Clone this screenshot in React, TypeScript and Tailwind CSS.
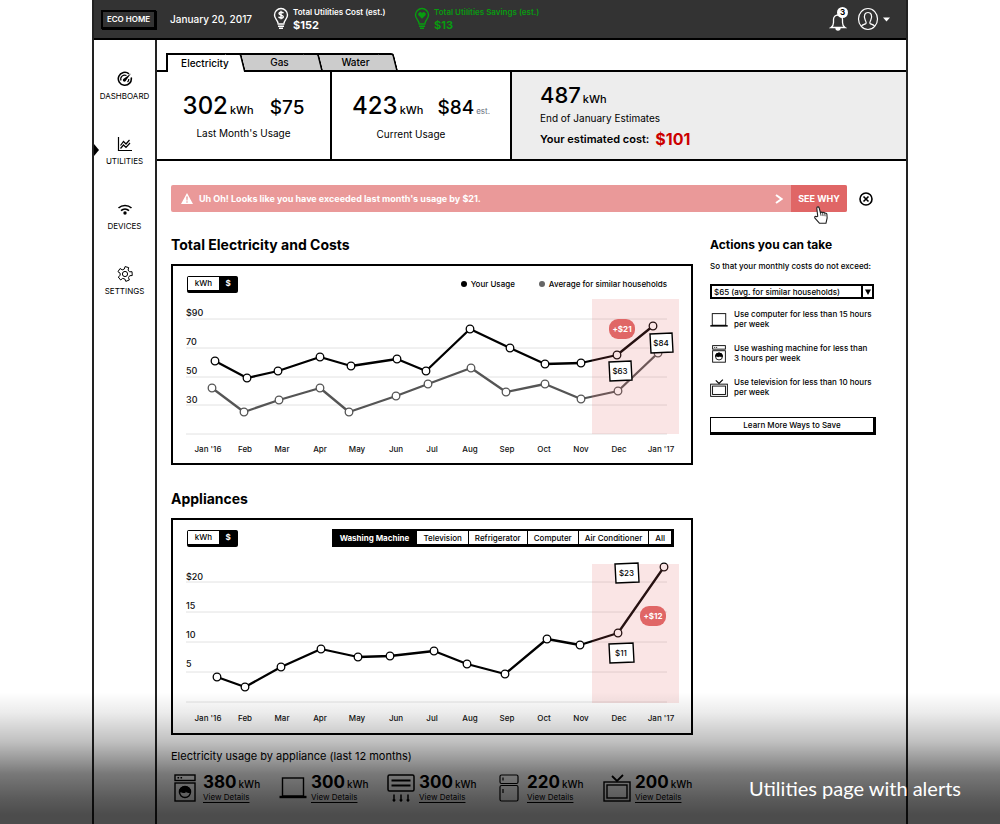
import React from "react";

type Point = [number, number];

const months = ["Jan '16", "Feb", "Mar", "Apr", "May", "Jun", "Jul", "Aug", "Sep", "Oct", "Nov", "Dec", "Jan '17"];
const monthX = [208, 245, 282, 320, 357, 396, 432, 470, 507, 544, 581, 619, 661];

const usage: Point[] = [[215, 361], [247, 378], [278, 371], [320, 357], [351, 366], [397, 359], [426, 371], [470, 329], [510, 348], [545, 364], [581, 363], [617, 355], [653, 326]];
const average: Point[] = [[212, 388], [244, 412], [279, 400], [320, 388], [349, 412], [396, 396], [428, 384], [471, 368], [506, 392], [545, 384], [581, 399], [618, 391], [658, 353]];
const washer: Point[] = [[217, 677], [245, 687], [281, 667], [321, 649], [358, 657], [390, 656], [434, 651], [467, 664], [505, 674], [547, 639], [580, 645], [618, 633], [664, 567]];

function Series({ points, color }: { points: Point[]; color: string }) {
  return (
    <g stroke={color}>
      <polyline points={points.map((p) => p.join(",")).join(" ")} fill="none" strokeWidth="2.3" strokeLinejoin="round" />
      {points.map(([x, y]) => (
        <circle key={x} cx={x} cy={y} r="3.8" fill="#fff" strokeWidth="1.3" />
      ))}
    </g>
  );
}

function Grid({ lines, labels, labelsY, monthsY }: { lines: number[]; labels: string[]; labelsY: number; monthsY: number }) {
  return (
    <g fontSize="9" fontWeight="500" fill="#111">
      {lines.map((y) => (
        <line key={y} x1="186" x2="667" y1={y} y2={y} stroke="#e2e2e2" />
      ))}
      {labels.map((label, i) => (
        <text key={label} x="186" y={labelsY + i * 29}>
          {label}
        </text>
      ))}
      {months.map((m, i) => (
        <text key={m} x={monthX[i]} y={monthsY} fontSize="8" textAnchor="middle">
          {m}
        </text>
      ))}
    </g>
  );
}

function Tag({ x, y, w, label }: { x: number; y: number; w: number; label: string }) {
  return (
    <g>
      <path d={`M${x} ${y + 1} L${x + w} ${y} L${x + w + 1} ${y + 19} L${x + 1} ${y + 20} Z`} fill="#fff" stroke="#000" strokeWidth="1.4" />
      <text x={x + w / 2} y={y + 13} fontSize="8" fontWeight="500" textAnchor="middle">
        {label}
      </text>
    </g>
  );
}

function Delta({ cx, cy, label }: { cx: number; cy: number; label: string }) {
  return (
    <g>
      <rect x={cx - 13} y={cy - 10} width="26" height="20" rx="9" fill="#e06666" />
      <text x={cx} y={cy + 3} fontSize="8" fontWeight="700" fill="#fff" textAnchor="middle">
        {label}
      </text>
    </g>
  );
}

function UnitToggle() {
  return (
    <div className="flex h-[17px] w-[51px] rounded-[2px] border border-b-[3px] border-black bg-black text-[8px] leading-[12px]">
      <button className="w-[31px] bg-white font-medium">kWh</button>
      <button className="flex-1 font-bold text-white">$</button>
    </div>
  );
}

function Washer({ className }: { className: string }) {
  return (
    <svg viewBox="0 0 22 28" className={className} fill="none" stroke="currentColor" strokeWidth="1.4">
      <rect x="1" y="1" width="20" height="5.5" />
      <path d="M3.5 3.8h1.6M6.5 3.8h1.6" />
      <rect x="1" y="9" width="20" height="18" />
      <circle cx="11" cy="18" r="5.5" />
      <path d="M5.6 18c1.8-1.4 3.6 1.4 5.4 0s3.6 1.4 5.4 0a5.4 5.4 0 0 0-10.8 0Z" fill="currentColor" />
    </svg>
  );
}

function Laptop({ className }: { className: string }) {
  return (
    <svg viewBox="0 0 28 22" className={className} fill="none" stroke="currentColor" strokeWidth="1.4">
      <rect x="3.5" y="1" width="21" height="18" />
      <path d="M0.5 20h27" strokeWidth="2.4" />
    </svg>
  );
}

function Television({ className }: { className: string }) {
  return (
    <svg viewBox="0 0 28 28" className={className} fill="none" stroke="currentColor" strokeWidth="1.4">
      <rect x="1" y="8" width="26" height="19" />
      <rect x="4" y="11" width="20" height="13" />
      <path d="M9 2l5 5 6-6" strokeWidth="1.8" />
    </svg>
  );
}

function AirConditioner({ className }: { className: string }) {
  return (
    <svg viewBox="0 0 28 28" className={className} fill="none" stroke="currentColor" strokeWidth="1.5">
      <rect x="1" y="1" width="26" height="16" rx="1.5" />
      <path d="M4.5 6.500h19M4.5 11.500h19" strokeWidth="1.8" />
      <path d="M7 20.5v6M14 20.5v6M21 20.5v6M5.800 25.500l1.200 1.500 1.200-1.500M12.800 25.500l1.200 1.500 1.200-1.500M19.800 25.500l1.200 1.500 1.200-1.500" />
    </svg>
  );
}

function Fridge({ className }: { className: string }) {
  return (
    <svg viewBox="0 0 20 28" className={className} fill="none" stroke="currentColor" strokeWidth="1.2">
      <rect x="1" y="1" width="18" height="8.5" rx="1.5" />
      <rect x="1" y="11.5" width="18" height="15.5" rx="1.5" />
      <path d="M4 3.5v3M4 15v4" />
    </svg>
  );
}

function Bulb({ heart }: { heart?: boolean }) {
  return (
    <svg viewBox="0 0 16 24" className="h-6 w-4" fill="none" stroke="currentColor" strokeWidth="1.4">
      <path d="M5 16.5C5 13 1.5 12 1.5 8a6.5 6.5 0 0 1 13 0c0 4-3.5 5-3.5 8.5" />
      <path d="M4.5 17h7M5 19.2h6M6 21.3h4" />
      {heart ? (
        <path d="M8 11.800 4.400 8.200a2 2 0 0 1 3.600-2 2 2 0 0 1 3.600 2Z" fill="currentColor" stroke="none" />
      ) : (
        <path d="M10.400 6.300C9.900 5 6 4.800 6 6.600S10.300 8 10.300 9.800 6.100 11.300 5.600 9.700M8 3.800v8.400" />
      )}
    </svg>
  );
}

const gear = Array.from({ length: 5 }, (_, i) => {
  const at = (deg: number, r: number) => {
    const a = ((deg + i * 72 - 75) * Math.PI) / 180;
    return `${(8 + r * Math.cos(a)).toFixed(2)} ${(8 + r * Math.sin(a)).toFixed(2)}`;
  };
  return `${i ? "L" : "M"}${at(-15, 7.4)}L${at(15, 7.4)}L${at(23, 5)}L${at(49, 5)}`;
}).join("") + "Z";

const nav = [
  {
    label: "DASHBOARD",
    icon: (
      <>
        <path d="M12 2.800A6.500 6.500 0 1 0 14.200 6.500" strokeWidth="1.6" />
        <path d="M4 9.500A4 4 0 0 1 9.500 4.500M11.800 8A4 4 0 0 1 10.500 11" />
        <path d="m14 2.500-7 5a1.600 1.600 0 1 0 2 2Z" fill="currentColor" stroke="none" />
      </>
    ),
  },
  {
    label: "UTILITIES",
    icon: <path d="M1.5 1v13.500H15M3.500 9.500l3-4 2.500 2.500 3.500-4M3.500 12.500l3-3.500 2.500 2.500 4-4.500" />,
  },
  {
    label: "DEVICES",
    icon: (
      <>
        <path d="M1.500 7a9.500 9.500 0 0 1 13 0M4 9.700a6 6 0 0 1 8 0" strokeWidth="1.6" />
        <circle cx="8" cy="12" r="1.7" fill="currentColor" stroke="none" />
      </>
    ),
  },
  {
    label: "SETTINGS",
    icon: (
      <>
        <path d={gear} strokeLinejoin="round" strokeWidth="1" />
        <circle cx="8" cy="8" r="2.6" strokeWidth="1" />
      </>
    ),
  },
];

const tips = [
  { icon: <Laptop className="w-[18px]" />, text: "Use computer for less than 15 hours per week" },
  { icon: <Washer className="w-[14px]" />, text: "Use washing machine for less than 3 hours per week" },
  { icon: <Television className="w-[18px]" />, text: "Use television for less than 10 hours per week" },
];

const totals = [
  { value: 380, icon: <Washer className="h-7" /> },
  { value: 300, icon: <Laptop className="w-7" /> },
  { value: 300, icon: <AirConditioner className="h-7" /> },
  { value: 220, icon: <Fridge className="h-7" /> },
  { value: 200, icon: <Television className="h-7" /> },
];

const tabShape =
  "relative h-[17px] border-l-2 border-t-2 border-black pl-1 text-[10px] font-medium before:absolute before:-top-0.5 before:-right-2 before:bottom-0 before:w-4 before:origin-bottom before:skew-x-[14deg] before:rounded-tr-[3px] before:border-t-2 before:border-r-2 before:border-black";

export default function App() {
  return (
    <div className="relative min-h-screen overflow-hidden bg-white font-[Inter,'Noto_Sans',sans-serif] text-black">
      <div className="mx-auto flex min-h-screen max-w-[816px] flex-col border-x-2 border-[#222]">
        <header className="flex h-10 shrink-0 items-center border-b-2 border-black bg-[#333] pl-[7px] text-white">
          <button className="mr-3.5 h-[19px] w-[55px] border-2 border-black text-[8px] leading-none font-semibold shadow-[1px_1px_0_#000]">ECO HOME</button>
          <time className="w-[103px] text-[10px] font-medium">January 20, 2017</time>
          <div className="flex w-[141px] items-center gap-1">
            <Bulb />
            <div className="text-[8px] leading-[13px] font-semibold">
              <p>Total Utilities Cost (est.)</p>
              <p className="text-[11px] font-bold">$152</p>
            </div>
          </div>
          <div className="flex items-center gap-1 text-[#089c10]">
            <Bulb heart />
            <div className="text-[8px] leading-[13px] font-semibold">
              <p>Total Utilities Savings (est.)</p>
              <p className="text-[11px] font-bold">$13</p>
            </div>
          </div>
          <div className="mr-4 ml-auto flex items-center gap-2.5">
            <button aria-label="Notifications" className="relative">
              <svg viewBox="0 0 18 24" className="h-6 w-[18px]" fill="none" stroke="currentColor" strokeWidth="1.3">
                <path d="M2 20.500h14c-1.500-1-2.500-2-2.500-5v-3a4.500 4.500 0 0 0-9 0v3c0 3-1 4-2.500 5Z" />
                <path d="M7 21a2 2 0 0 0 4 0Z" fill="currentColor" />
              </svg>
              <span className="absolute top-0 left-2 size-[11px] rounded-full bg-white text-[8px] leading-[11px] font-bold text-black">3</span>
            </button>
            <button aria-label="Account" className="flex items-center gap-1">
              <svg viewBox="0 0 22 24" className="h-6 w-[22px]" fill="none" stroke="currentColor" strokeWidth="1.2">
                <ellipse cx="11" cy="12" rx="9.5" ry="10.5" />
                <path d="M4.500 19c1-1.500 3.500-1.500 4.500-2.500.6-1-.2-2-.8-3.500-2-5 0-7.500 2.800-7.500s4.800 2.500 2.800 7.500c-.6 1.500-1.400 2.500-.8 3.500 1 1 3.500 1 4.500 2.500" />
              </svg>
              <svg viewBox="0 0 7 5" className="w-[7px]" fill="currentColor">
                <path d="M0 0.5h7L3.5 4.5Z" />
              </svg>
            </button>
          </div>
        </header>

        <div className="flex grow">
          <nav className="flex w-[63px] shrink-0 flex-col gap-[35px] border-r-2 border-[#222] pt-[31px]">
            {nav.map(({ label, icon }) => (
              <a key={label} href="#" className="relative flex flex-col items-center gap-1 text-[8px] leading-[10px]">
                {label === "UTILITIES" && (
                  <svg viewBox="0 0 5 12" className="absolute top-2 left-0 h-3">
                    <path d="M0 0l5 6-5 6Z" />
                  </svg>
                )}
                <svg viewBox="0 0 16 16" className="size-4" fill="none" stroke="currentColor" strokeWidth="1.2">
                  {icon}
                </svg>
                {label}
              </a>
            ))}
          </nav>

          <main className="min-w-0 grow pt-[13px]">
            <div role="tablist" className="flex items-end pl-[9px]">
              <button role="tab" aria-selected="true" className={tabShape + " z-20 -mb-0.5 h-[19px] w-[72px] bg-white before:bg-white"}>
                <span className="relative">Electricity</span>
              </button>
              <button role="tab" aria-selected="false" className={tabShape + " z-10 w-[77px] bg-[#ccc] before:bg-[#ccc]"}>
                <span className="relative">Gas</span>
              </button>
              <button role="tab" aria-selected="false" className={tabShape + " w-[75px] bg-[#ccc] before:bg-[#ccc]"}>
                <span className="relative">Water</span>
              </button>
            </div>

            <section className="flex h-[91px] border-y-2 border-black text-[10px] leading-[15px]">
              <div className="flex w-[173px] flex-col items-center justify-center gap-1 pt-1">
                <p className="flex items-baseline text-2xl leading-6 font-medium">
                  302<span className="mr-4 ml-0.5 text-[11px]">kWh</span>
                  <span className="text-[19px]">$75</span>
                </p>
                <p>Last Month's Usage</p>
              </div>
              <div className="flex w-[182px] flex-col items-center justify-center gap-1 border-x-2 border-black pt-1">
                <p className="flex items-baseline text-2xl leading-6 font-medium">
                  423<span className="mr-3.5 ml-0.5 text-[11px]">kWh</span>
                  <span className="text-[19px]">$84</span>
                  <span className="ml-0.5 text-[8px] font-normal text-gray-500">est.</span>
                </p>
                <p className="pr-5">Current Usage</p>
              </div>
              <div className="flex grow flex-col justify-center gap-[5px] bg-[#ededed] pl-7">
                <p className="flex items-baseline text-[22px] leading-[22px] font-medium">
                  487<span className="ml-0.5 text-[11px] leading-none">kWh</span>
                </p>
                <p>End of January Estimates</p>
                <p className="flex items-center gap-1.5 text-[11px] leading-4 font-semibold">
                  Your estimated cost: <strong className="text-[16px] font-bold text-[#cc0000]">$101</strong>
                </p>
              </div>
            </section>

            <div className="mt-6 ml-3.5 flex h-[27px] items-center">
              <div role="alert" className="flex h-full w-[676px] items-center overflow-hidden rounded-[2px] bg-[#ea9999] pl-2.5 text-[9px] font-bold text-white">
                <svg viewBox="0 0 12 11" className="mr-1.5 w-3" fill="currentColor">
                  <path fillRule="evenodd" d="M6 0 12 11H0ZM5.200 3.500l.3 4h1l.3-4ZM6 8.200a.8.8 0 1 0 0 1.600.8.8 0 0 0 0-1.600Z" />
                </svg>
                Uh Oh! Looks like you have exceeded last month's usage by $21.
                <svg viewBox="0 0 8 10" className="mr-2 ml-auto w-2" fill="none" stroke="currentColor" strokeWidth="2">
                  <path d="M1 1l5.500 4L1 9" />
                </svg>
                <button className="h-full w-14 bg-[#e06666] text-[9px]">SEE WHY</button>
              </div>
              <button aria-label="Dismiss alert" className="ml-3">
                <svg viewBox="0 0 14 14" className="size-3.5" fill="none" stroke="currentColor" strokeWidth="1.6">
                  <circle cx="7" cy="7" r="6" />
                  <path d="m4.500 4.500 5 5m0-5-5 5" />
                </svg>
              </button>
            </div>

            <div className="mt-6 ml-3.5 flex">
              <div className="w-[522px]">
                <h2 className="text-[14px] leading-[18px] font-bold">Total Electricity and Costs</h2>
                <section className="mt-2.5 border-2 border-black">
                  <div className="flex h-[30px] items-center justify-between pt-1.5 pr-6 pl-3.5">
                    <UnitToggle />
                    <div className="flex items-center text-[8px] font-medium">
                      <i className="mr-1 size-1.5 rounded-full bg-black" />
                      Your Usage
                      <i className="mr-1 ml-6 size-1.5 rounded-full bg-[#666]" />
                      Average for similar households
                    </div>
                  </div>
                  <svg viewBox="173 296 518 167" className="block w-full">
                    <Grid lines={[319, 348, 377, 405, 434]} labels={["$90", "70", "50", "30"]} labelsY={316} monthsY={452} />
                    <Series points={average} color="#555" />
                    <Series points={usage} color="#000" />
                    <rect x="592" y="299" width="87" height="135" fill="#e06666" fillOpacity="0.17" />
                    <Delta cx={622} cy={329} label="+$21" />
                    <Tag x={609} y={361} w={22} label="$63" />
                    <Tag x={650} y={333} w={22} label="$84" />
                  </svg>
                </section>

                <h2 className="mt-[25px] text-[14px] leading-[18px] font-bold">Appliances</h2>
                <section className="mt-2.5 border-2 border-black">
                  <div className="flex h-[30px] items-center justify-between pt-1.5 pr-[17px] pl-3.5">
                    <UnitToggle />
                    <div className="flex h-[18px] divide-x divide-black border border-t-2 border-r-[3px] border-b-[3px] border-black text-[8px] leading-none font-medium">
                      <button className="bg-black px-[7px] font-bold text-white">Washing Machine</button>
                      {["Television", "Refrigerator", "Computer", "Air Conditioner", "All"].map((name) => (
                        <button key={name} className="px-1.5">
                          {name}
                        </button>
                      ))}
                    </div>
                  </div>
                  <svg viewBox="173 550 518 183" className="block w-full">
                    <Grid lines={[582, 612, 642, 672, 702]} labels={["$20", "15", "10", "5"]} labelsY={580} monthsY={721} />
                    <Series points={washer} color="#000" />
                    <rect x="592" y="564" width="87" height="139" fill="#e06666" fillOpacity="0.17" />
                    <Tag x={615} y={563} w={23} label="$23" />
                    <Tag x={609} y={643} w={24} label="$11" />
                    <Delta cx={653} cy={616} label="+$12" />
                  </svg>
                </section>

                <h3 className="mt-[13px] text-[11px] leading-4">Electricity usage by appliance (last 12 months)</h3>
                <ul className="mt-2.5 mb-3 flex gap-1">
                  {totals.map(({ value, icon }, i) => (
                    <li key={i} className="flex w-[104px] shrink-0 items-center gap-1">
                      <span className="flex w-7 justify-center">{icon}</span>
                      <div>
                        <p className="flex items-baseline gap-0.5 text-[17px] leading-4 font-bold">
                          {value}
                          <span className="text-[10px] font-medium">kWh</span>
                        </p>
                        <a href="#" className="block text-[8px] leading-[10px] underline underline-offset-2">
                          View Details
                        </a>
                      </div>
                    </li>
                  ))}
                </ul>
              </div>

              <aside className="ml-[17px] w-[166px] text-[8px] leading-[10px] font-medium">
                <h2 className="text-[12px] leading-[18px] font-bold">Actions you can take</h2>
                <label htmlFor="budget" className="mt-[7px] block whitespace-nowrap">
                  So that your monthly costs do not exceed:
                </label>
                <div className="relative mt-[13px] h-[15px] w-[164px] border-2 border-black">
                  <select id="budget" className="block h-full w-full appearance-none bg-white pl-0.5 leading-[10px]">
                    <option>$65 (avg. for similar households)</option>
                  </select>
                  <span className="pointer-events-none absolute inset-y-0 right-0 flex w-[11px] items-center justify-center border-l-2 border-black">
                    <svg viewBox="0 0 6 6" className="w-1.5">
                      <path d="M0 0.5h6L3 6Z" />
                    </svg>
                  </span>
                </div>
                <ul className="mt-2.5 flex flex-col gap-3.5">
                  {tips.map(({ icon, text }) => (
                    <li key={text} className="flex gap-1.5">
                      <span className="mt-0.5 flex w-[18px] shrink-0 items-center justify-center">{icon}</span>
                      <p className="w-[140px] shrink-0">{text}</p>
                    </li>
                  ))}
                </ul>
                <button className="mt-5 block h-[18px] w-full border border-r-[3px] border-b-[3px] border-black font-medium">Learn More Ways to Save</button>
              </aside>
            </div>
          </main>
        </div>
      </div>

      <svg viewBox="0 0 15 20" className="absolute top-[206px] left-[814px] w-[14px]" fill="#fff" stroke="#222" strokeWidth="1.2" strokeLinejoin="round">
        <path d="M4 11 3 2.500C3 .5 5 .4 5.500 2L7 7.500c.3-1.300 2-1.200 2.300 0 .5-1 2-.8 2.300.5.7-.8 2-.3 2.200.8l.3 4-1.300 5.700H6L1 13c-.8-1.500.8-2.500 1.800-1.500Z" />
        <path d="M7 7.500l.5 3M9.300 8l.4 2.800M11.600 8.500l.3 2.500" strokeWidth="0.9" />
      </svg>

      <div className="pointer-events-none absolute inset-x-0 bottom-0 flex h-[132px] items-end justify-end bg-[linear-gradient(to_bottom,transparent,rgb(0_0_0/0.08)_16%,rgb(0_0_0/0.25)_38%,rgb(0_0_0/0.4)_51%,rgb(0_0_0/0.53)_62%,rgb(0_0_0/0.64)_80%,rgb(0_0_0/0.7)_93%)] pr-[39px] pb-[22px]">
        <p className="font-[Lato,sans-serif] text-[20px] leading-7 text-white">Utilities page with alerts</p>
      </div>
    </div>
  );
}
